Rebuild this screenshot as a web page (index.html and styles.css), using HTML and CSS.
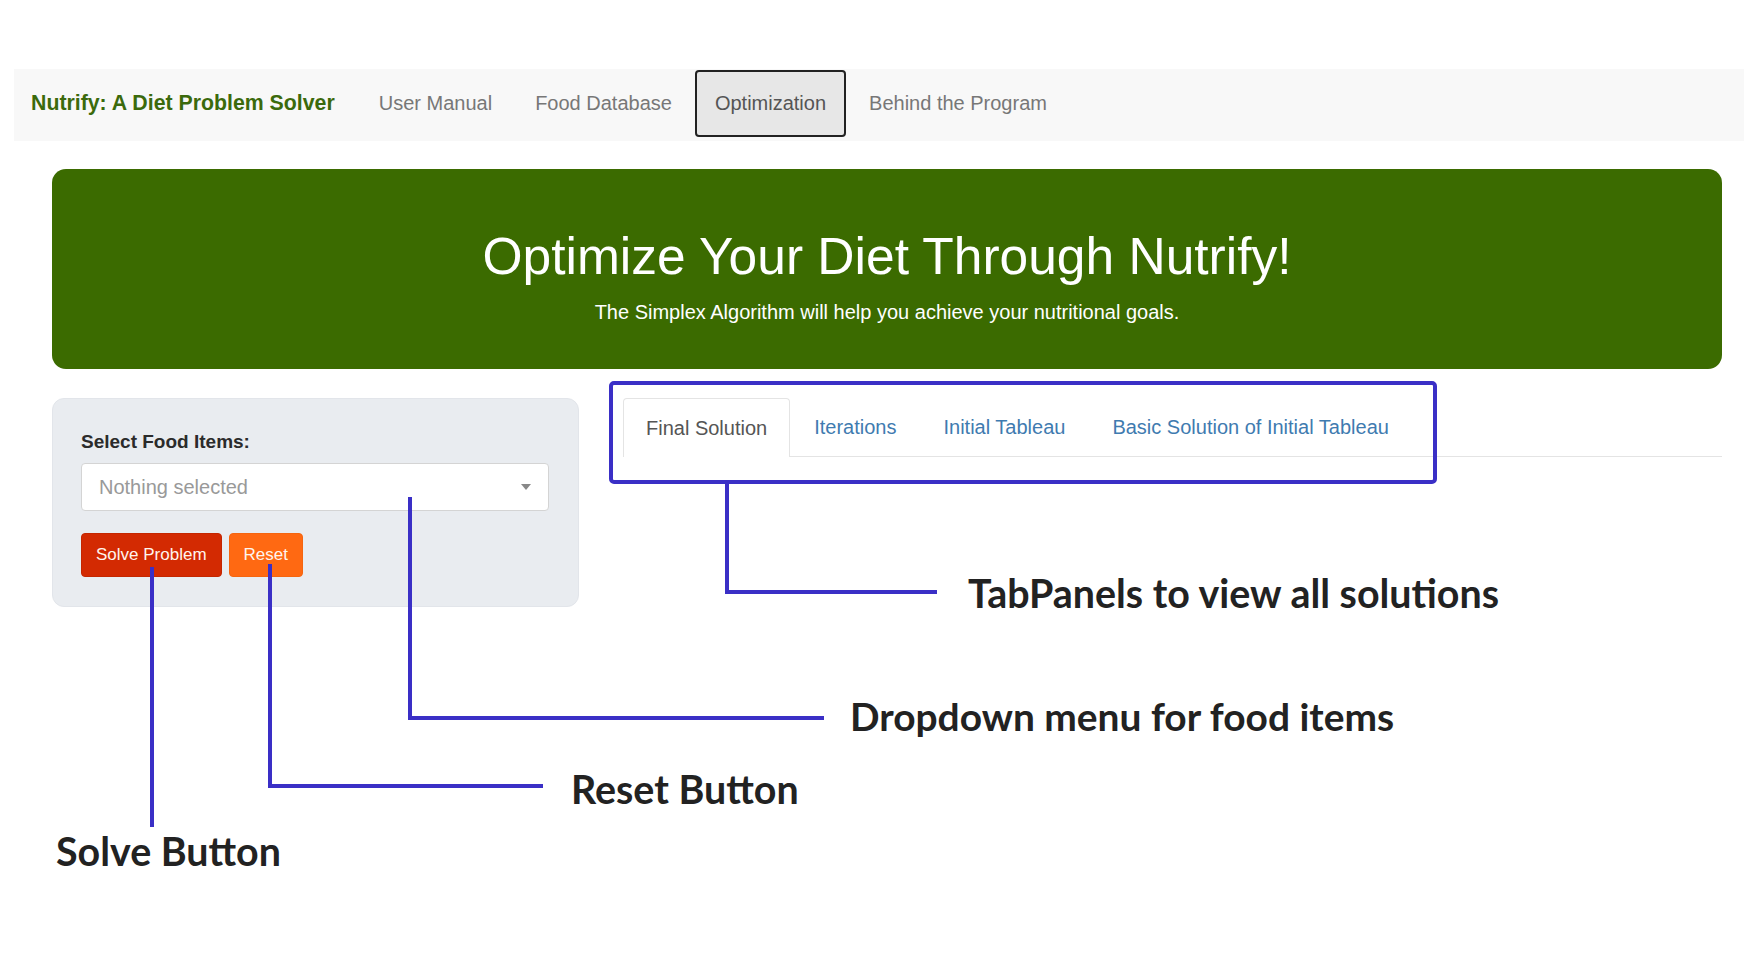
FILE: index.html
```html
<!DOCTYPE html>
<html lang="en">
<head>
<meta charset="utf-8">
<title>Nutrify: A Diet Problem Solver</title>
<link rel="stylesheet" href="styles.css">
</head>
<body>
<div class="page">
  <nav class="navbar">
    <span class="brand">Nutrify: A Diet Problem Solver</span>
    <ul class="nav-links">
      <li class="nav-item">User Manual</li>
      <li class="nav-item">Food Database</li>
      <li class="nav-item active">Optimization</li>
      <li class="nav-item">Behind the Program</li>
    </ul>
  </nav>

  <main class="content">
    <section class="hero">
      <h1 class="hero-title">Optimize Your Diet Through Nutrify!</h1>
      <p class="hero-sub">The Simplex Algorithm will help you achieve your nutritional goals.</p>
    </section>

    <div class="row">
      <aside class="sidebar">
        <label class="field-label">Select Food Items:</label>
        <div class="select">
          <span class="placeholder">Nothing selected</span>
          <span class="caret"></span>
        </div>
        <div class="buttons">
          <button class="btn btn-solve">Solve Problem</button>
          <button class="btn btn-reset">Reset</button>
        </div>
      </aside>

      <section class="main-panel">
        <ul class="tabs">
          <li class="tab active">Final Solution</li>
          <li class="tab">Iterations</li>
          <li class="tab">Initial Tableau</li>
          <li class="tab">Basic Solution of Initial Tableau</li>
        </ul>
      </section>
    </div>
  </main>

  <div class="annotations">
    <svg class="ann-lines" width="1758" height="976" viewBox="0 0 1758 976">
      <rect x="611" y="383" width="824" height="99" rx="3" fill="none" stroke="#3a2fc6" stroke-width="4"/>
      <polyline points="727,484 727,592 937,592" fill="none" stroke="#3a2fc6" stroke-width="4"/>
      <polyline points="410,497 410,718 824,718" fill="none" stroke="#3a2fc6" stroke-width="4"/>
      <polyline points="270,564 270,786 543,786" fill="none" stroke="#3a2fc6" stroke-width="4"/>
      <polyline points="152,567 152,827" fill="none" stroke="#3a2fc6" stroke-width="4"/>
    </svg>
    <span class="ann-label ann-tabs">TabPanels to view all solutions</span>
    <span class="ann-label ann-dropdown">Dropdown menu for food items</span>
    <span class="ann-label ann-reset">Reset Button</span>
    <span class="ann-label ann-solve">Solve Button</span>
  </div>
</div>
</body>
</html>
```

FILE: styles.css
```css
* { box-sizing: border-box; }

html, body {
  margin: 0;
  padding: 0;
  background: #ffffff;
}

body {
  font-family: "Liberation Sans", Arial, sans-serif;
  color: #333;
}

.page {
  position: relative;
  width: 1758px;
  height: 976px;
  padding-top: 69px;
  overflow: hidden;
}

/* Navbar */
.navbar {
  display: flex;
  align-items: stretch;
  margin: 0 14px;
  height: 72px;
  padding: 1px 0 4px 17px;
  background: #f8f8f8;
}

.brand {
  display: flex;
  align-items: center;
  font-size: 21.3px;
  font-weight: bold;
  color: #3b6a0c;
  margin-right: 24px;
}

.nav-links {
  display: flex;
  gap: 3px;
  list-style: none;
  margin: 0;
  padding: 0;
}

.nav-item {
  display: flex;
  align-items: center;
  padding: 0 18px;
  border: 2px solid transparent;
  border-radius: 4px;
  font-size: 20px;
  color: #777;
}

.nav-item.active {
  background: #e7e7e7;
  border-color: #222;
  color: #555;
}

/* Content */
.content {
  padding: 28px 36px 0 52px;
}

.hero {
  height: 200px;
  background: #3b6b00;
  border-radius: 14px;
  color: #fff;
  text-align: center;
  padding-top: 54px;
}

.hero-title {
  margin: 0;
  font-size: 51.5px;
  font-weight: normal;
  line-height: 66px;
}

.hero-sub {
  margin: 11px 0 0;
  font-size: 20px;
  line-height: 24px;
}

.row {
  display: flex;
  align-items: flex-start;
  gap: 44px;
  margin-top: 29px;
}

/* Sidebar */
.sidebar {
  width: 527px;
  height: 209px;
  background: #e9ecf0;
  border: 1px solid #e2e5ea;
  border-radius: 12px;
  padding: 29px 29px 0 28px;
}

.field-label {
  display: block;
  font-size: 19px;
  font-weight: bold;
  color: #2b2b2b;
  line-height: 28px;
  margin-bottom: 7px;
}

.select {
  display: flex;
  align-items: center;
  justify-content: space-between;
  height: 48px;
  background: #fff;
  border: 1px solid #d4d4d4;
  border-radius: 4px;
  padding: 0 17px 0 17px;
}

.placeholder {
  font-size: 20px;
  color: #999;
}

.caret {
  width: 0;
  height: 0;
  border-left: 5px solid transparent;
  border-right: 5px solid transparent;
  border-top: 6px solid #888;
}

.buttons {
  display: flex;
  gap: 7px;
  margin-top: 22px;
}

.btn {
  height: 44px;
  padding: 0 14px;
  border: 1px solid transparent;
  border-radius: 4px;
  font-family: "Liberation Sans", Arial, sans-serif;
  font-size: 17px;
  color: #fff5ee;
}

.btn-solve {
  background: #d32a02;
  border-color: #c42600;
}

.btn-reset {
  background: #ff6912;
  border-color: #f5650f;
}

/* Tabs */
.main-panel {
  flex: 1;
}

.tabs {
  display: flex;
  gap: 1px;
  list-style: none;
  margin: 0;
  padding: 0;
  border-bottom: 1px solid #e4e4e4;
}

.tab {
  height: 58px;
  display: flex;
  align-items: center;
  padding: 0 22px;
  font-size: 20px;
  color: #3f7bb0;
  border: 1px solid transparent;
  border-bottom: none;
  border-radius: 4px 4px 0 0;
  margin-bottom: -1px;
}

.tab.active {
  color: #555;
  background: #fff;
  border-color: #e4e4e4;
  height: 59px;
}

/* Annotations overlay */
.annotations {
  position: absolute;
  inset: 0;
  pointer-events: none;
}

.ann-lines {
  position: absolute;
  top: 0;
  left: 0;
}

.ann-label {
  position: absolute;
  font-family: Lato, "Liberation Sans", sans-serif;
  font-weight: bold;
  font-size: 39.4px;
  line-height: 1;
  color: #222;
  white-space: nowrap;
  transform: translateY(-50%);
}

.ann-tabs { left: 968px; top: 593px; }
.ann-dropdown { left: 850px; top: 716px; font-size: 38.9px; }
.ann-reset { left: 571px; top: 789px; }
.ann-solve { left: 56px; top: 851px; }
```
